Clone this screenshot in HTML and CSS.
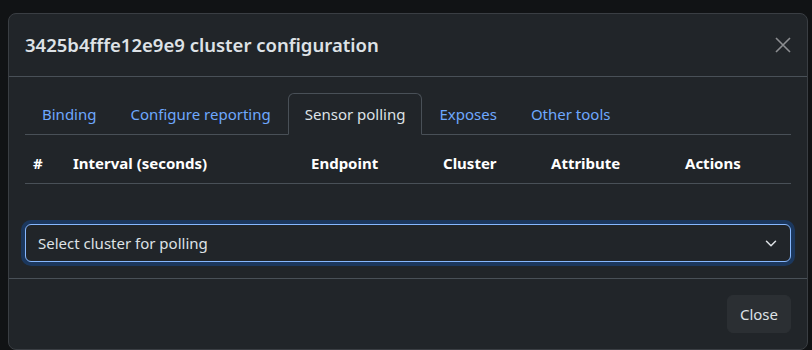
FILE: index.html
```html
<!DOCTYPE html>
<html lang="en">

<head>
    <meta charset="UTF-8">
    <meta name="viewport" content="width=device-width, initial-scale=1.0">
    <title>Cluster configuration</title>
    <link rel="stylesheet" href="styles.css">
</head>

<body>
    <div class="modal">
        <div class="modal-header">
            <h5 class="modal-title">3425b4fffe12e9e9 cluster configuration</h5>
            <button class="btn-close" aria-label="Close">
                <svg width="16" height="16" viewBox="0 0 16 16">
                    <path d="M1 1L15 15M15 1L1 15" stroke="currentColor" stroke-width="1.6"/>
                </svg>
            </button>
        </div>
        <div class="modal-body">
            <ul class="nav-tabs">
                <li><a class="nav-link" href="#">Binding</a></li>
                <li><a class="nav-link" href="#">Configure reporting</a></li>
                <li><a class="nav-link active" href="#">Sensor polling</a></li>
                <li><a class="nav-link" href="#">Exposes</a></li>
                <li><a class="nav-link" href="#">Other tools</a></li>
            </ul>
            <div class="tab-content">
                <table class="table">
                    <thead>
                        <tr>
                            <th class="col-num">#</th>
                            <th class="col-interval">Interval (seconds)</th>
                            <th class="col-endpoint">Endpoint</th>
                            <th class="col-cluster">Cluster</th>
                            <th class="col-attr">Attribute</th>
                            <th>Actions</th>
                        </tr>
                    </thead>
                    <tbody></tbody>
                </table>
                <div class="select-wrap">
                    <select class="form-select">
                        <option>Select cluster for polling</option>
                    </select>
                    <svg class="chevron" width="12" height="9" viewBox="0 0 16 12">
                        <path d="M2 3l6 6 6-6" fill="none" stroke="currentColor" stroke-width="2" stroke-linecap="round" stroke-linejoin="round"/>
                    </svg>
                </div>
            </div>
        </div>
        <div class="modal-footer">
            <button class="btn">Close</button>
        </div>
    </div>
</body>

</html>
```

FILE: styles.css
```css
body {
    margin: 0;
    background: #111315;
    font-family: "Noto Sans", "Open Sans", sans-serif;
    font-size: 15px;
    line-height: 24px;
    color: #dee2e6;
}

.modal {
    width: 798px;
    margin: 13px 0 0 8px;
    background: #212529;
    border: 1px solid #3a3e43;
    border-radius: 8px;
}

.modal-header {
    display: flex;
    align-items: center;
    justify-content: space-between;
    padding: 16px;
    border-bottom: 1px solid #495057;
}

.modal-title {
    margin: 0;
    font-size: 18.5px;
    font-weight: 600;
    line-height: 30px;
    color: #dee2e6;
}

.btn-close {
    display: flex;
    padding: 0;
    background: none;
    border: 0;
    color: #8b8d90;
}

.modal-body {
    padding: 16px;
}

.nav-tabs {
    display: flex;
    margin: 0;
    padding: 0;
    list-style: none;
    border-bottom: 1px solid #495057;
}

.nav-link {
    display: block;
    padding: 8px 16px;
    margin-bottom: -1px;
    color: #6ea8fe;
    text-decoration: none;
    border: 1px solid transparent;
    border-top-left-radius: 6px;
    border-top-right-radius: 6px;
}

.nav-link.active {
    color: #dee2e6;
    background: #212529;
    border-color: #495057 #495057 #212529;
}

.tab-content {
    padding-top: 8px;
}

.table {
    width: 100%;
    border-collapse: collapse;
    margin-bottom: 40px;
}

.table th {
    padding: 8px;
    text-align: left;
    font-weight: 700;
    color: #fff;
    border-bottom: 1px solid #495057;
}

.col-num {
    width: 24px;
}

.col-interval {
    width: 222px;
}

.col-endpoint {
    width: 116px;
}

.col-cluster {
    width: 92px;
}

.col-attr {
    width: 118px;
}

.select-wrap {
    position: relative;
}

.form-select {
    display: block;
    width: 100%;
    height: 38px;
    padding: 6px 36px 6px 12px;
    font-family: inherit;
    font-size: 15px;
    color: #dee2e6;
    background: #212529;
    border: 1px solid #86b7fe;
    border-radius: 6px;
    box-shadow: 0 0 0 4px rgba(13, 110, 253, 0.25);
    appearance: none;
    outline: none;
}

.chevron {
    position: absolute;
    right: 14px;
    top: 15px;
    color: #dee2e6;
}

.modal-footer {
    display: flex;
    justify-content: flex-end;
    padding: 12px;
    border-top: 1px solid #495057;
}

.btn {
    margin: 4px;
    padding: 6px 12px;
    font-family: inherit;
    font-size: 15px;
    line-height: 24px;
    color: #dee2e6;
    background: #2b2f33;
    border: 1px solid #2b2f33;
    border-radius: 6px;
}
```
